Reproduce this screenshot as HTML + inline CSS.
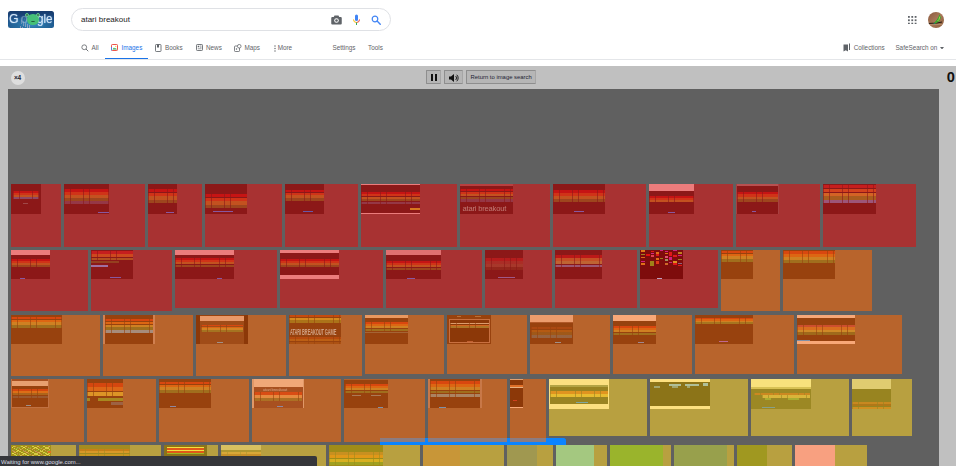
<!DOCTYPE html>
<html lang="en">
<head>
<meta charset="utf-8">
<title>atari breakout - Google Search</title>
<style>
*{box-sizing:border-box;margin:0;padding:0}
html,body{width:956px;height:466px;overflow:hidden;background:#fff}
body{position:relative;font-family:"Liberation Sans",Arial,sans-serif;color:#222}
.abs{position:absolute}
#logo{left:8px;top:11px;width:46px;height:17px;border-radius:2.5px;background:radial-gradient(ellipse 26px 9px at 50% 78%,#3a8fc0 0%,rgba(42,120,170,.6) 55%,rgba(30,80,140,0) 100%),linear-gradient(180deg,#173a6c 0%,#1d4f88 55%,#1f5c92 100%);overflow:hidden;color:#e6f3ff;font-size:13.6px;line-height:17px}
#logo .lg{position:absolute;top:-0.6px;text-shadow:0 0 1.5px #9fd0ff;opacity:.92}
#logo .fw{position:absolute;left:12px;top:5px;width:10px;height:12px;background:repeating-linear-gradient(100deg,rgba(220,190,210,.55) 0 .7px,transparent .7px 2.2px);-webkit-mask-image:linear-gradient(to top,#000 10%,transparent 95%);mask-image:linear-gradient(to top,#000 10%,transparent 95%)}
#logo .frog{position:absolute;left:19.4px;top:3.3px;width:11.4px;height:10.6px;border-radius:50%;background:#45c078}
#logo .e1{position:absolute;left:17.2px;top:2.4px;width:4px;height:4px;border-radius:50%;background:#8fe0b0;border:0.7px solid #59c88a;box-shadow:inset 0 0 0 0.6px #222}
#logo .e2{position:absolute;left:28.4px;top:2.1px;width:4px;height:4px;border-radius:50%;background:#8fe0b0;border:0.7px solid #59c88a;box-shadow:inset 0 0 0 0.6px #222}
#logo .sm{position:absolute;left:23.2px;top:9.2px;width:3.6px;height:2px;border-bottom:0.7px solid #1d5a3a;border-radius:0 0 50% 50%}
#sbox{left:71px;top:8px;width:320px;height:23px;border:1px solid #dfe1e5;border-radius:12px;background:#fff}
#q{left:81px;top:14.7px;font-size:8px;line-height:10px;color:#222;white-space:nowrap}
.tab{position:absolute;top:43.4px;font-size:6.35px;line-height:9px;color:#5f6368;white-space:nowrap}
.tab.on{color:#1a73e8}
#uline{left:105px;top:57.6px;width:43px;height:1.5px;background:#1a73e8}
#sep{left:0;top:59px;width:956px;height:1px;background:#e4e6e9}
#gray{left:0;top:65.8px;width:956px;height:401px;background:#c0c0c0}
#game{left:8px;top:89px;width:931px;height:377px;background:#606060;overflow:hidden}
.bk{position:absolute;overflow:hidden}
.th{position:absolute;left:0;top:0;overflow:hidden}
.th i{position:absolute;display:block}
.th b{position:absolute;display:block;font-weight:normal;opacity:.62;color:#e8c8c0;white-space:nowrap;line-height:1;letter-spacing:-0.2px}
.btn{position:absolute;top:70px;height:14.4px;background:#b6b6b6;border:1px solid #8e8e8e;border-right-color:#a6a6a6;border-radius:1px}
#lives{left:10.5px;top:70.5px;width:14px;height:14px;border-radius:50%;background:#dedede;font-size:6.5px;line-height:14px;text-align:center;color:#223;font-weight:bold;letter-spacing:-0.2px}
#score{right:1.2px;top:68.5px;font-size:14.6px;line-height:17px;font-weight:bold;color:#111}
#status{left:0;top:456px;width:317px;height:10px;background:#35363a;border-top-right-radius:2px;color:#dcdfe4;font-size:5.95px;line-height:12px;padding-left:1px;white-space:nowrap}
#paddle{left:380px;top:437.5px;width:186px;height:7.5px;background:#0a84ff;border-radius:2.5px 2.5px 0 0}
.pg{position:absolute;top:437.5px;height:4.2px;background:#8c7c80}
</style>
</head>
<body>
<!-- header -->
<div id="logo" class="abs"><span class="lg" style="left:1.4px;transform:scaleX(.9);transform-origin:0 0">G</span><span class="lg" style="left:12.5px;opacity:.35">o</span><span class="fw"></span><span class="lg" style="left:22.5px;opacity:.0">o</span><span class="lg" style="left:28.6px;transform:scaleX(.86);transform-origin:0 0">gle</span><span class="frog"></span><span class="e1"></span><span class="e2"></span><span class="sm"></span></div>
<div id="sbox" class="abs"></div>
<div id="q" class="abs">atari breakout</div>
<!-- search box icons -->
<svg class="abs" style="left:331px;top:15px" width="11" height="10" viewBox="0 0 22 20"><path d="M7 1 5.5 4H2.5A2 2 0 0 0 .5 6v11a2 2 0 0 0 2 2h17a2 2 0 0 0 2-2V6a2 2 0 0 0-2-2h-3L15 1z" fill="#5f6368"/><circle cx="11" cy="11" r="4.6" fill="#fff"/><circle cx="11" cy="11" r="2.6" fill="#5f6368"/></svg>
<svg class="abs" style="left:352px;top:14px" width="9" height="12" viewBox="0 0 18 24"><rect x="6" y="1" width="6" height="13" rx="3" fill="#4285f4"/><path d="M3 11a6 6 0 0 0 6 6" fill="none" stroke="#fbbc05" stroke-width="2"/><path d="M15 11a6 6 0 0 1-6 6" fill="none" stroke="#ea4335" stroke-width="2"/><rect x="8" y="17" width="2" height="5" fill="#34a853"/></svg>
<svg class="abs" style="left:371px;top:14.5px" width="10" height="10" viewBox="0 0 20 20"><circle cx="8" cy="8" r="5.6" fill="none" stroke="#4285f4" stroke-width="2.4"/><path d="M12.2 12.2 18.5 18.5" stroke="#4285f4" stroke-width="2.8" stroke-linecap="round"/></svg>
<!-- apps + avatar -->
<svg class="abs" style="left:908px;top:15.5px" width="8.5" height="8.5" viewBox="0 0 17 17"><g fill="#5f6368"><rect x="0" y="0" width="3.6" height="3.6"/><rect x="6.7" y="0" width="3.6" height="3.6"/><rect x="13.4" y="0" width="3.6" height="3.6"/><rect x="0" y="6.7" width="3.6" height="3.6"/><rect x="6.7" y="6.7" width="3.6" height="3.6"/><rect x="13.4" y="6.7" width="3.6" height="3.6"/><rect x="0" y="13.4" width="3.6" height="3.6"/><rect x="6.7" y="13.4" width="3.6" height="3.6"/><rect x="13.4" y="13.4" width="3.6" height="3.6"/></g></svg>
<svg class="abs" style="left:927.9px;top:12px" width="16" height="16" viewBox="0 0 16 16"><defs><clipPath id="avc"><circle cx="8" cy="8" r="8"/></clipPath><linearGradient id="avg" x1="0" y1="0" x2="1" y2="1"><stop offset="0" stop-color="#8a5a40"/><stop offset=".5" stop-color="#a87858"/><stop offset="1" stop-color="#8a5c3c"/></linearGradient></defs><g clip-path="url(#avc)"><rect width="16" height="16" fill="url(#avg)"/><path d="M0 11.5 9 11 14 10" stroke="#2a1c14" stroke-width="1.1" fill="none"/><path d="M11.6 2.200 12.900 5.500 11.500 9 7.500 11.500 4.800 13 5.600 11.400 8.500 8.200 10.400 5z" fill="#3aa62c"/><path d="M11.800 4.500 11 7.500 9.500 9" stroke="#a4d850" stroke-width="1" fill="none"/><path d="M5 12.800 7 11" stroke="#2a5a8a" stroke-width=".8"/><path d="M0 12.500h16" stroke="#b89070" stroke-width=".8"/></g></svg>
<!-- tabs -->
<svg class="abs" style="left:81px;top:43.5px" width="8" height="8" viewBox="0 0 16 16"><circle cx="6.5" cy="6.5" r="4.8" fill="none" stroke="#5f6368" stroke-width="1.6"/><path d="M10 10 14.5 14.5" stroke="#5f6368" stroke-width="1.8"/></svg>
<div class="tab" style="left:91.5px">All</div>
<svg class="abs" style="left:111px;top:44px" width="7" height="7" viewBox="0 0 14 14"><rect x="1" y="1" width="12" height="12" rx="1.5" fill="#fff" stroke="#ea4335" stroke-width="1.8"/><path d="M1 13V6" stroke="#4285f4" stroke-width="1.8"/><path d="M3 11 6 7l2 2.5 1.5-1.5L12 11z" fill="#34a853"/><circle cx="9.5" cy="4.5" r="1.2" fill="#fbbc05"/></svg>
<div class="tab on" style="left:121.5px">Images</div>
<svg class="abs" style="left:155px;top:43.5px" width="6.5" height="8" viewBox="0 0 13 16"><rect x="1" y="1" width="11" height="14" rx="1.5" fill="none" stroke="#5f6368" stroke-width="1.7"/><rect x="4" y="1" width="4" height="6" fill="#5f6368"/></svg>
<div class="tab" style="left:165px">Books</div>
<svg class="abs" style="left:195.5px;top:44px" width="7" height="7" viewBox="0 0 14 14"><rect x="1" y="1" width="12" height="12" rx="1.5" fill="none" stroke="#5f6368" stroke-width="1.7"/><rect x="3.5" y="3.5" width="3" height="3" fill="#5f6368"/><path d="M8 4h3M8 6.5h3M3.5 9.5h7.5" stroke="#5f6368" stroke-width="1.2"/></svg>
<div class="tab" style="left:206px">News</div>
<svg class="abs" style="left:234px;top:43.5px" width="7.5" height="8" viewBox="0 0 15 16"><rect x="1" y="4" width="10" height="11" rx="1.5" fill="none" stroke="#5f6368" stroke-width="1.6"/><circle cx="10.5" cy="4.5" r="3.6" fill="#fff" stroke="#5f6368" stroke-width="1.5"/><circle cx="5" cy="10" r="1.5" fill="#5f6368"/></svg>
<div class="tab" style="left:244.5px">Maps</div>
<svg class="abs" style="left:273.5px;top:44.5px" width="2" height="7" viewBox="0 0 4 14"><circle cx="2" cy="2" r="1.4" fill="#5f6368"/><circle cx="2" cy="7" r="1.4" fill="#5f6368"/><circle cx="2" cy="12" r="1.4" fill="#5f6368"/></svg>
<div class="tab" style="left:277.7px">More</div>
<div class="tab" style="left:332.5px">Settings</div>
<div class="tab" style="left:368px">Tools</div>
<svg class="abs" style="left:843px;top:43px" width="7.5" height="9" viewBox="0 0 15 18"><path d="M1 3h9v14l-4.500-2.500L1 17z" fill="#5f6368"/><path d="M12 1h2v13h-2z" fill="#5f6368"/></svg>
<div class="tab" style="left:853.7px">Collections</div>
<div class="tab" style="left:895.4px">SafeSearch on</div>
<svg class="abs" style="left:939.5px;top:46.5px" width="4" height="2.5" viewBox="0 0 8 5"><path d="M0 0h8L4 5z" fill="#5f6368"/></svg>
<div id="uline" class="abs"></div>
<div id="sep" class="abs"></div>
<!-- game -->
<div id="gray" class="abs"></div>
<div id="lives" class="abs">×4</div>
<div class="btn" style="left:426px;width:15px"><svg style="position:absolute;left:4.3px;top:3.2px" width="6" height="7" viewBox="0 0 6 7"><rect x="0" y="0" width="2" height="7" fill="#111"/><rect x="4" y="0" width="2" height="7" fill="#111"/></svg></div>
<div class="btn" style="left:444px;width:19px"><svg style="position:absolute;left:4px;top:2.8px" width="10" height="8" viewBox="0 0 20 16"><path d="M0 5h4l6-5v16l-6-5H0z" fill="#111"/><path d="M13 4a5 5 0 0 1 0 8M15.500 1.500a9 9 0 0 1 0 13" fill="none" stroke="#111" stroke-width="1.8"/></svg></div>
<div class="btn" style="left:466px;width:70.3px;font-size:5.9px;line-height:12.6px;text-align:center;color:#223;white-space:nowrap">Return to image search</div>
<div id="score" class="abs">0</div>
<div id="game" class="abs">
<div class="bk" style="left:3px;top:95px;width:49.8px;height:62.6px;background:#a83232"><div class="th" style="width:30px;height:30px;background:#8c1818"><i style="left:2px;top:6.8px;width:26px;height:8.2px;opacity:0.86;background:repeating-linear-gradient(to right,#8c181899 0 0.6px,transparent 0.6px 6.3px),linear-gradient(to bottom,#d01414 0.0% 21.0%,transparent 21.0% 25.0%,#dc3818 25.0% 46.0%,transparent 46.0% 50.0%,#dc6c24cc 50.0% 71.0%,transparent 71.0% 75.0%,#905070 75.0% 96.0%,transparent 96.0% 100.0%)"></i><i style="left:12px;top:19px;width:5px;height:0.6px;background:#a04848"></i></div></div>
<div class="bk" style="left:55.8px;top:95px;width:81.2px;height:62.6px;background:#a83232"><div class="th" style="width:45.2px;height:30px;background:#8c1818"><i style="left:0px;top:5px;width:45.2px;height:15px;opacity:0.86;background:repeating-linear-gradient(to right,#8c181899 0 0.6px,transparent 0.6px 6.3px),linear-gradient(to bottom,#d01414 0.0% 16.8%,transparent 16.8% 20.0%,#dc3818 20.0% 36.8%,transparent 36.8% 40.0%,#dc6c24cc 40.0% 56.8%,transparent 56.8% 60.0%,#b0702499 60.0% 76.8%,transparent 76.8% 80.0%,#a0587890 80.0% 96.8%,transparent 96.8% 100.0%)"></i><i style="left:34px;top:28px;width:11px;height:1px;background:#8858a0"></i></div></div>
<div class="bk" style="left:140px;top:95px;width:54px;height:62.6px;background:#a83232"><div class="th" style="width:29px;height:30px;background:#8c1818"><i style="left:0px;top:4.5px;width:29px;height:15.5px;opacity:0.86;background:repeating-linear-gradient(to right,#8c181899 0 0.6px,transparent 0.6px 6.3px),linear-gradient(to bottom,#d01414 0.0% 21.0%,transparent 21.0% 25.0%,#dc3818 25.0% 46.0%,transparent 46.0% 50.0%,#dc6c24cc 50.0% 71.0%,transparent 71.0% 75.0%,#b0702499 75.0% 96.0%,transparent 96.0% 100.0%)"></i><i style="left:18px;top:28px;width:8px;height:1px;background:#8858a0"></i></div></div>
<div class="bk" style="left:197px;top:95px;width:77px;height:62.6px;background:#a83232"><div class="th" style="width:42px;height:30px;background:#8c1818"><i style="left:0px;top:10px;width:42px;height:15px;opacity:0.86;background:repeating-linear-gradient(to right,#8c181899 0 0.6px,transparent 0.6px 6.3px),linear-gradient(to bottom,#d01414 0.0% 21.0%,transparent 21.0% 25.0%,#dc3818 25.0% 46.0%,transparent 46.0% 50.0%,#dc6c24cc 50.0% 71.0%,transparent 71.0% 75.0%,#b0702499 75.0% 96.0%,transparent 96.0% 100.0%)"></i><i style="left:8px;top:27px;width:20px;height:1px;background:#8858a0"></i></div></div>
<div class="bk" style="left:277px;top:95px;width:73px;height:62.6px;background:#a83232"><div class="th" style="width:39px;height:30px;background:#8c1818"><i style="left:0px;top:6px;width:39px;height:11px;opacity:0.86;background:repeating-linear-gradient(to right,#8c181899 0 0.6px,transparent 0.6px 6.3px),linear-gradient(to bottom,#d01414 0.0% 21.0%,transparent 21.0% 25.0%,#dc3818 25.0% 46.0%,transparent 46.0% 50.0%,#dc6c24cc 50.0% 71.0%,transparent 71.0% 75.0%,#b0702499 75.0% 96.0%,transparent 96.0% 100.0%)"></i><i style="left:18px;top:27px;width:10px;height:1px;background:#6858a8"></i></div></div>
<div class="bk" style="left:353px;top:95px;width:96px;height:62.6px;background:#a83232"><div class="th" style="width:59px;height:30px;background:#8c1818"><i style="left:0;top:0px;width:59px;height:1px;background:#ec7c7c"></i><i style="left:0px;top:8px;width:59px;height:12px;opacity:0.86;background:repeating-linear-gradient(to right,#8c181899 0 0.6px,transparent 0.6px 6.3px),linear-gradient(to bottom,#d01414 0.0% 16.8%,transparent 16.8% 20.0%,#dc3818 20.0% 36.8%,transparent 36.8% 40.0%,#dc6c24cc 40.0% 56.8%,transparent 56.8% 60.0%,#b0702499 60.0% 76.8%,transparent 76.8% 80.0%,#a0587890 80.0% 96.8%,transparent 96.8% 100.0%)"></i><i style="left:0;top:29px;width:59px;height:1px;background:#ec7c7c"></i><i style="left:48.6px;top:24.4px;width:10.4px;height:1.6px;background:#d87820"></i></div></div>
<div class="bk" style="left:452px;top:95px;width:90px;height:62.6px;background:#a83232"><div class="th" style="width:53px;height:30px;background:#8c1818"><i style="left:0;top:0px;width:53px;height:2px;background:#b84040"></i><i style="left:0px;top:4.6px;width:53px;height:13.4px;opacity:0.86;background:repeating-linear-gradient(to right,#8c181899 0 0.6px,transparent 0.6px 6.3px),linear-gradient(to bottom,#d01414 0.0% 16.8%,transparent 16.8% 20.0%,#dc3818 20.0% 36.8%,transparent 36.8% 40.0%,#dc6c24cc 40.0% 56.8%,transparent 56.8% 60.0%,#b0702499 60.0% 76.8%,transparent 76.8% 80.0%,#a0587890 80.0% 96.8%,transparent 96.8% 100.0%)"></i><b style="left:2.5px;top:20.6px;font-size:7.6px;color:#e0b4ac">atari breakout</b></div></div>
<div class="bk" style="left:545px;top:95px;width:93px;height:62.6px;background:#a83232"><div class="th" style="width:52px;height:30px;background:#8c1818"><i style="left:0px;top:6px;width:52px;height:12px;opacity:0.86;background:repeating-linear-gradient(to right,#8c181899 0 0.6px,transparent 0.6px 6.3px),linear-gradient(to bottom,#d01414 0.0% 21.0%,transparent 21.0% 25.0%,#dc3818 25.0% 46.0%,transparent 46.0% 50.0%,#dc6c24cc 50.0% 71.0%,transparent 71.0% 75.0%,#b0702499 75.0% 96.0%,transparent 96.0% 100.0%)"></i><i style="left:21px;top:27px;width:10px;height:1px;background:#8858a0"></i></div></div>
<div class="bk" style="left:641px;top:95px;width:84px;height:62.6px;background:#a83232"><div class="th" style="width:45px;height:30px;background:#8c1818"><i style="left:0;top:0px;width:45px;height:7px;background:#ec7c7c"></i><i style="left:0px;top:11.5px;width:45px;height:6.5px;opacity:0.86;background:repeating-linear-gradient(to right,#8c181899 0 0.6px,transparent 0.6px 6.3px),linear-gradient(to bottom,#d01414 0.0% 28.0%,transparent 28.0% 33.3%,#dc3818 33.3% 61.3%,transparent 61.3% 66.7%,#dc6c24cc 66.7% 94.7%,transparent 94.7% 100.0%)"></i><i style="left:19px;top:28px;width:7px;height:1px;background:#8858a0"></i></div></div>
<div class="bk" style="left:728px;top:95px;width:84px;height:62.6px;background:#a83232"><div class="th" style="width:43px;height:30px;background:#8c1818"><i style="left:0;top:0px;width:43px;height:2.4px;background:#b85050"></i><i style="left:0px;top:0;width:1px;height:30px;background:#a84040"></i><i style="left:42px;top:0;width:1px;height:30px;background:#a84040"></i><i style="left:1px;top:7.8px;width:41px;height:9.8px;opacity:0.86;background:repeating-linear-gradient(to right,#8c181899 0 0.6px,transparent 0.6px 6.3px),linear-gradient(to bottom,#d01414 0.0% 21.0%,transparent 21.0% 25.0%,#dc3818 25.0% 46.0%,transparent 46.0% 50.0%,#dc6c24cc 50.0% 71.0%,transparent 71.0% 75.0%,#b0702499 75.0% 96.0%,transparent 96.0% 100.0%)"></i><i style="left:16px;top:27px;width:4px;height:1px;background:#8858a0"></i></div></div>
<div class="bk" style="left:815px;top:95px;width:93px;height:62.6px;background:#a83232"><div class="th" style="width:53px;height:30px;background:#8c1818"><i style="left:0px;top:1px;width:53px;height:19px;opacity:0.86;background:repeating-linear-gradient(to right,#8c181899 0 0.6px,transparent 0.6px 6.3px),linear-gradient(to bottom,#d02020 0.0% 16.8%,transparent 16.8% 20.0%,#e04820 20.0% 36.8%,transparent 36.8% 40.0%,#e07028 40.0% 56.8%,transparent 56.8% 60.0%,#b06820 60.0% 76.8%,transparent 76.8% 80.0%,#a06088 80.0% 96.8%,transparent 96.8% 100.0%)"></i></div></div>
<div class="bk" style="left:3px;top:160.7px;width:76.6px;height:61.8px;background:#a83232"><div class="th" style="width:39px;height:29.3px;background:#8c1818"><i style="left:0;top:0px;width:39px;height:5px;background:#ec7c7c"></i><i style="left:0px;top:9px;width:39px;height:8px;opacity:0.86;background:repeating-linear-gradient(to right,#8c181899 0 0.6px,transparent 0.6px 6.3px),linear-gradient(to bottom,#d01414 0.0% 21.0%,transparent 21.0% 25.0%,#dc3818 25.0% 46.0%,transparent 46.0% 50.0%,#dc6c24cc 50.0% 71.0%,transparent 71.0% 75.0%,#b0702499 75.0% 96.0%,transparent 96.0% 100.0%)"></i><i style="left:9px;top:28px;width:5px;height:1px;background:#8858a0"></i></div></div>
<div class="bk" style="left:82.6px;top:160.7px;width:81.4px;height:61.8px;background:#a83232"><div class="th" style="width:42.4px;height:29.3px;background:#8c1818"><i style="left:0px;top:1px;width:42.4px;height:10px;opacity:0.86;background:repeating-linear-gradient(to right,#8c181899 0 0.6px,transparent 0.6px 6.3px),linear-gradient(to bottom,#d02020 0.0% 28.0%,transparent 28.0% 33.3%,#d85020 33.3% 61.3%,transparent 61.3% 66.7%,#d07828aa 66.7% 94.7%,transparent 94.7% 100.0%)"></i><i style="left:0px;top:11.6px;width:28px;height:1.8px;background:#a0702877"></i><i style="left:0px;top:15px;width:17px;height:2px;background:#a070a0"></i><i style="left:19px;top:27px;width:11px;height:1.5px;background:#8858a0"></i></div></div>
<div class="bk" style="left:167px;top:160.7px;width:102px;height:58.1px;background:#a83232"><div class="th" style="width:59px;height:29.3px;background:#8c1818"><i style="left:0;top:0px;width:59px;height:5px;background:#ec7c7c"></i><i style="left:0px;top:8px;width:59px;height:9px;opacity:0.86;background:repeating-linear-gradient(to right,#8c181899 0 0.6px,transparent 0.6px 6.3px),linear-gradient(to bottom,#d01414 0.0% 21.0%,transparent 21.0% 25.0%,#dc3818 25.0% 46.0%,transparent 46.0% 50.0%,#dc6c24cc 50.0% 71.0%,transparent 71.0% 75.0%,#b0702499 75.0% 96.0%,transparent 96.0% 100.0%)"></i><i style="left:42px;top:28px;width:5px;height:1px;background:#8858a0"></i></div></div>
<div class="bk" style="left:272px;top:160.7px;width:103px;height:58.1px;background:#a83232"><div class="th" style="width:59px;height:29.3px;background:#8c1818"><i style="left:0;top:0px;width:59px;height:3px;background:#ec7c7c"></i><i style="left:0px;top:9px;width:59px;height:10px;opacity:0.86;background:repeating-linear-gradient(to right,#8c181899 0 0.6px,transparent 0.6px 6.3px),linear-gradient(to bottom,#d01414 0.0% 16.8%,transparent 16.8% 20.0%,#dc3818 20.0% 36.8%,transparent 36.8% 40.0%,#dc6c24cc 40.0% 56.8%,transparent 56.8% 60.0%,#b0702499 60.0% 76.8%,transparent 76.8% 80.0%,#8c1818 80.0% 96.8%,transparent 96.8% 100.0%)"></i><i style="left:0;top:25px;width:59px;height:4.3px;background:#ec7c7c"></i></div></div>
<div class="bk" style="left:378px;top:160.7px;width:96px;height:58.1px;background:#a83232"><div class="th" style="width:55px;height:29.3px;background:#8c1818"><i style="left:0;top:0px;width:55px;height:5px;background:#e07070"></i><i style="left:0px;top:11px;width:55px;height:9px;opacity:0.86;background:repeating-linear-gradient(to right,#8c181899 0 0.6px,transparent 0.6px 6.3px),linear-gradient(to bottom,#d01414 0.0% 21.0%,transparent 21.0% 25.0%,#dc3818 25.0% 46.0%,transparent 46.0% 50.0%,#dc6c24cc 50.0% 71.0%,transparent 71.0% 75.0%,#b0702499 75.0% 96.0%,transparent 96.0% 100.0%)"></i><i style="left:21px;top:28px;width:8px;height:1px;background:#8858a0"></i></div></div>
<div class="bk" style="left:477px;top:160.7px;width:67px;height:58.1px;background:#a83232"><div class="th" style="width:38px;height:29.3px;background:#8c1818"><i style="left:0px;top:8px;width:38px;height:12px;opacity:0.86;background:repeating-linear-gradient(to right,#8c181899 0 0.6px,transparent 0.6px 6.3px),linear-gradient(to bottom,#c82020cc 0.0% 21.0%,transparent 21.0% 25.0%,#d0483888 25.0% 46.0%,transparent 46.0% 50.0%,#d0684877 50.0% 71.0%,transparent 71.0% 75.0%,#b0582844 75.0% 96.0%,transparent 96.0% 100.0%)"></i><i style="left:13px;top:27px;width:17px;height:1.5px;background:#a05888"></i></div></div>
<div class="bk" style="left:547px;top:160.7px;width:82px;height:58.1px;background:#a83232"><div class="th" style="width:47px;height:29.3px;background:#8c1818"><i style="left:0px;top:5px;width:47px;height:13px;opacity:0.86;background:repeating-linear-gradient(to right,#8c181899 0 0.6px,transparent 0.6px 6.3px),linear-gradient(to bottom,#c41818 0.0% 21.0%,transparent 21.0% 25.0%,#d05828 25.0% 46.0%,transparent 46.0% 50.0%,#c87038 50.0% 71.0%,transparent 71.0% 75.0%,#a06080 75.0% 96.0%,transparent 96.0% 100.0%)"></i></div></div>
<div class="bk" style="left:632px;top:160.7px;width:78px;height:58.1px;background:#a83232"><div class="th" style="width:43px;height:29.3px;background:#7e0c0c"><i style="left:1.4px;top:0.4px;width:3.8px;height:1.8px;background:#e07818"></i><i style="left:1.4px;top:4.5px;width:3.8px;height:1.2px;background:#a08020"></i><i style="left:1.4px;top:7px;width:3.8px;height:1.4px;background:#e06818"></i><i style="left:1.4px;top:11.1px;width:3.8px;height:1.2px;background:#d02080"></i><i style="left:1.4px;top:13.7px;width:3.8px;height:1.8px;background:#e07018"></i><i style="left:6.2px;top:4.8px;width:3.5px;height:1.8px;background:#e01010"></i><i style="left:10.8px;top:0.9px;width:3.3px;height:1.8px;background:#e01818"></i><i style="left:10.8px;top:3.4px;width:3.3px;height:1.4px;background:#d02888"></i><i style="left:10.8px;top:5.7px;width:3.3px;height:1.8px;background:#e04050"></i><i style="left:10.3px;top:11.6px;width:3.8px;height:4.3px;background:#a08018"></i><i style="left:15.6px;top:2.2px;width:3.5px;height:1.8px;background:#e07018"></i><i style="left:15.6px;top:4.8px;width:3.5px;height:1.8px;background:#e01818"></i><i style="left:15.6px;top:8.1px;width:3.5px;height:2.4px;background:#e07018"></i><i style="left:15.6px;top:11.6px;width:3.5px;height:3px;background:#e03818"></i><i style="left:20.1px;top:0.4px;width:2.9px;height:1.2px;background:#d02080"></i><i style="left:20.1px;top:8.1px;width:2.9px;height:1.4px;background:#988020"></i><i style="left:24.5px;top:0.9px;width:3.5px;height:1.3px;background:#d02080"></i><i style="left:24.5px;top:3.1px;width:3.5px;height:1.7px;background:#e07018"></i><i style="left:24.5px;top:6.6px;width:3.5px;height:1.8px;background:#e05070"></i><i style="left:24.5px;top:9.8px;width:3.5px;height:1.3px;background:#a09060"></i><i style="left:24.5px;top:12.9px;width:3.5px;height:2.6px;background:#d06828"></i><i style="left:28.9px;top:2.2px;width:3.4px;height:1.8px;background:#e01818"></i><i style="left:28.9px;top:4.8px;width:3.4px;height:1.5px;background:#e01818"></i><i style="left:28.9px;top:7.5px;width:3.4px;height:3px;background:#d02080"></i><i style="left:28.9px;top:12px;width:3.4px;height:1.7px;background:#c82078"></i><i style="left:33.4px;top:0.4px;width:3.5px;height:1.2px;background:#d02080"></i><i style="left:33.4px;top:5.7px;width:3.5px;height:1.8px;background:#e01818"></i><i style="left:33.4px;top:11.1px;width:3.5px;height:1.8px;background:#e09020"></i><i style="left:33.4px;top:13.7px;width:3.5px;height:1.8px;background:#e01818"></i><i style="left:37.8px;top:2.2px;width:3.9px;height:2.6px;background:#c08020"></i><i style="left:37.8px;top:5.7px;width:3.9px;height:0.9px;background:#d02080"></i><i style="left:37.8px;top:9.3px;width:3.9px;height:1.2px;background:#a08020"></i><i style="left:37.8px;top:12.9px;width:3.9px;height:1.7px;background:#906080"></i><i style="left:37.8px;top:15.5px;width:3.9px;height:0.9px;background:#e01818"></i><i style="left:17px;top:28px;width:5px;height:1px;background:#c0a0c0"></i></div></div>
<div class="bk" style="left:713px;top:160.7px;width:59px;height:61.3px;background:#b8642c"><div class="th" style="width:32px;height:29.3px;background:#98420e"><i style="left:0px;top:1px;width:32px;height:11px;opacity:0.96;background:repeating-linear-gradient(to right,#98420e99 0 0.6px,transparent 0.6px 6.3px),linear-gradient(to bottom,#dc4810 0.0% 21.0%,transparent 21.0% 25.0%,#e06814 25.0% 46.0%,transparent 46.0% 50.0%,#e09428cc 50.0% 71.0%,transparent 71.0% 75.0%,#a8902899 75.0% 96.0%,transparent 96.0% 100.0%)"></i></div></div>
<div class="bk" style="left:775px;top:160.7px;width:89px;height:61.3px;background:#b8642c"><div class="th" style="width:52px;height:29.3px;background:#98420e"><i style="left:0px;top:1px;width:52px;height:12px;opacity:0.96;background:repeating-linear-gradient(to right,#98420e99 0 0.6px,transparent 0.6px 6.3px),linear-gradient(to bottom,#dc4810 0.0% 21.0%,transparent 21.0% 25.0%,#e06814 25.0% 46.0%,transparent 46.0% 50.0%,#e09428cc 50.0% 71.0%,transparent 71.0% 75.0%,#a8902899 75.0% 96.0%,transparent 96.0% 100.0%)"></i></div></div>
<div class="bk" style="left:3px;top:226px;width:89px;height:60.5px;background:#b8642c"><div class="th" style="width:51px;height:28.6px;background:#98420e"><i style="left:0px;top:1.5px;width:51px;height:11.5px;opacity:0.96;background:repeating-linear-gradient(to right,#98420e99 0 0.6px,transparent 0.6px 6.3px),linear-gradient(to bottom,#dc4810 0.0% 21.0%,transparent 21.0% 25.0%,#e06814 25.0% 46.0%,transparent 46.0% 50.0%,#e09428cc 50.0% 71.0%,transparent 71.0% 75.0%,#a8902899 75.0% 96.0%,transparent 96.0% 100.0%)"></i></div></div>
<div class="bk" style="left:95px;top:226px;width:90px;height:60.5px;background:#b8642c"><div class="th" style="width:52px;height:28.6px;background:#98420e"><i style="left:2px;top:4px;width:48px;height:14px;opacity:0.96;background:repeating-linear-gradient(to right,#98420e99 0 0.6px,transparent 0.6px 6.3px),linear-gradient(to bottom,#dc4810 0.0% 16.8%,transparent 16.8% 20.0%,#e06814 20.0% 36.8%,transparent 36.8% 40.0%,#e09428cc 40.0% 56.8%,transparent 56.8% 60.0%,#a8902899 60.0% 76.8%,transparent 76.8% 80.0%,#a89080 80.0% 96.8%,transparent 96.8% 100.0%)"></i><i style="left:0px;top:0;width:2px;height:28.6px;background:#d08050"></i><i style="left:50px;top:0;width:2px;height:28.6px;background:#d08050"></i></div></div>
<div class="bk" style="left:188px;top:226px;width:90px;height:60.5px;background:#b8642c"><div class="th" style="width:52px;height:28.6px;background:#98420e"><i style="left:4px;top:0.5px;width:44px;height:5.1px;background:#e89868"></i><i style="left:4px;top:5.6px;width:44px;height:23px;background:#a04c18"></i><i style="left:5px;top:9.5px;width:42px;height:7px;opacity:0.96;background:repeating-linear-gradient(to right,#98420e99 0 0.6px,transparent 0.6px 6.3px),linear-gradient(to bottom,#dc4810 0.0% 21.0%,transparent 21.0% 25.0%,#e06814 25.0% 46.0%,transparent 46.0% 50.0%,#e09428cc 50.0% 71.0%,transparent 71.0% 75.0%,#a8902899 75.0% 96.0%,transparent 96.0% 100.0%)"></i><i style="left:21px;top:26.5px;width:6px;height:0.8px;background:#a09088"></i><i style="left:0px;top:0;width:4px;height:28.6px;background:#8c3808"></i><i style="left:48px;top:0;width:4px;height:28.6px;background:#8c3808"></i></div></div>
<div class="bk" style="left:281px;top:226px;width:73px;height:60.5px;background:#b8642c"><div class="th" style="width:52px;height:28.6px;background:#98420e"><i style="left:0px;top:0px;width:52px;height:7.6px;opacity:0.96;background:repeating-linear-gradient(to right,#98420e99 0 0.6px,transparent 0.6px 6.3px),linear-gradient(to bottom,#c84c10 0.0% 28.0%,transparent 28.0% 33.3%,#d88c20 33.3% 61.3%,transparent 61.3% 66.7%,#b89020aa 66.7% 94.7%,transparent 94.7% 100.0%)"></i><b style="left:1px;top:13.2px;font-size:9px;transform:scaleX(0.44);transform-origin:0 0;font-weight:bold;color:#f0d8c8">ATARI BREAKOUT GAME</b><i style="left:0px;top:22px;width:52px;height:6.6px;opacity:0.96;background:repeating-linear-gradient(to right,#98420e99 0 0.6px,transparent 0.6px 6.3px),linear-gradient(to bottom,#c85010aa 0.0% 28.0%,transparent 28.0% 33.3%,#d07018aa 33.3% 61.3%,transparent 61.3% 66.7%,#c0601888 66.7% 94.7%,transparent 94.7% 100.0%)"></i></div></div>
<div class="bk" style="left:357px;top:226px;width:79px;height:58.5px;background:#b8642c"><div class="th" style="width:43px;height:28.6px;background:#98420e"><i style="left:0;top:0px;width:43px;height:3px;background:#e89860"></i><i style="left:0px;top:7px;width:43px;height:8.5px;opacity:0.96;background:repeating-linear-gradient(to right,#98420e99 0 0.6px,transparent 0.6px 6.3px),linear-gradient(to bottom,#dc4810 0.0% 21.0%,transparent 21.0% 25.0%,#e06814 25.0% 46.0%,transparent 46.0% 50.0%,#e09428cc 50.0% 71.0%,transparent 71.0% 75.0%,#a8902899 75.0% 96.0%,transparent 96.0% 100.0%)"></i><i style="left:0px;top:16.5px;width:43px;height:0.8px;background:#b8987066"></i></div></div>
<div class="bk" style="left:439px;top:226px;width:80px;height:58.5px;background:#b8642c"><div class="th" style="width:44px;height:28.6px;background:#98420e"><i style="left:10px;top:0.6px;width:4px;height:1px;background:#d0905099"></i><i style="left:28px;top:0.6px;width:6px;height:1px;background:#d0905099"></i><i style="left:2px;top:3.6px;width:41.2px;height:24px;background:#c87040"></i><i style="left:3px;top:4.6px;width:39.2px;height:22px;background:#8c3808"></i><i style="left:3px;top:7.6px;width:39.2px;height:5px;opacity:0.96;background:repeating-linear-gradient(to right,#98420e99 0 0.6px,transparent 0.6px 6.3px),linear-gradient(to bottom,#e0a070 0.0% 28.0%,transparent 28.0% 33.3%,#d86820 33.3% 61.3%,transparent 61.3% 66.7%,#b07828 66.7% 94.7%,transparent 94.7% 100.0%)"></i><i style="left:20px;top:26px;width:6px;height:0.8px;background:#c06030"></i></div></div>
<div class="bk" style="left:522px;top:226px;width:80px;height:58.5px;background:#b8642c"><div class="th" style="width:43px;height:28.6px;background:#98420e"><i style="left:0;top:0px;width:43px;height:7px;background:#ec9c6c"></i><i style="left:0;top:7px;width:43px;height:1px;background:#c0683899"></i><i style="left:1px;top:12px;width:41px;height:10.5px;opacity:0.96;background:repeating-linear-gradient(to right,#98420e99 0 0.6px,transparent 0.6px 6.3px),linear-gradient(to bottom,#d8581855 0.0% 21.0%,transparent 21.0% 25.0%,#d8781877 25.0% 46.0%,transparent 46.0% 50.0%,#b0883055 50.0% 71.0%,transparent 71.0% 75.0%,#98989066 75.0% 96.0%,transparent 96.0% 100.0%)"></i><i style="left:25px;top:26.6px;width:6px;height:0.8px;background:#a09088"></i></div></div>
<div class="bk" style="left:605px;top:226px;width:79px;height:58.5px;background:#b8642c"><div class="th" style="width:43px;height:28.6px;background:#98420e"><i style="left:0;top:0px;width:43px;height:6px;background:#f8a878"></i><i style="left:0px;top:11px;width:43px;height:9px;opacity:0.96;background:repeating-linear-gradient(to right,#98420e99 0 0.6px,transparent 0.6px 6.3px),linear-gradient(to bottom,#dc4810 0.0% 21.0%,transparent 21.0% 25.0%,#e06814 25.0% 46.0%,transparent 46.0% 50.0%,#e09428cc 50.0% 71.0%,transparent 71.0% 75.0%,#a8902899 75.0% 96.0%,transparent 96.0% 100.0%)"></i><i style="left:25px;top:27px;width:6px;height:1px;background:#a08890"></i></div></div>
<div class="bk" style="left:687px;top:226px;width:99px;height:58.5px;background:#b8642c"><div class="th" style="width:58px;height:28.6px;background:#98420e"><i style="left:0px;top:3px;width:58px;height:6px;opacity:0.96;background:repeating-linear-gradient(to right,#98420e99 0 0.6px,transparent 0.6px 6.3px),linear-gradient(to bottom,#dc4810 0.0% 21.0%,transparent 21.0% 25.0%,#e06814 25.0% 46.0%,transparent 46.0% 50.0%,#e09428cc 50.0% 71.0%,transparent 71.0% 75.0%,#a87820 75.0% 96.0%,transparent 96.0% 100.0%)"></i><i style="left:24px;top:26px;width:9px;height:1px;background:#c06890"></i></div></div>
<div class="bk" style="left:789px;top:226px;width:105px;height:58.5px;background:#b8642c"><div class="th" style="width:58px;height:28.6px;background:#98420e"><i style="left:0;top:0px;width:58px;height:2.5px;background:#f8a878"></i><i style="left:0px;top:9.8px;width:58px;height:10.6px;opacity:0.96;background:repeating-linear-gradient(to right,#98420e99 0 0.6px,transparent 0.6px 6.3px),linear-gradient(to bottom,#d05030 0.0% 21.0%,transparent 21.0% 25.0%,#dc7020 25.0% 46.0%,transparent 46.0% 50.0%,#e0a030cc 50.0% 71.0%,transparent 71.0% 75.0%,#a8902888 75.0% 96.0%,transparent 96.0% 100.0%)"></i><i style="left:0px;top:25.2px;width:13px;height:0.8px;background:#8090a8"></i><i style="left:0;top:26px;width:58px;height:3px;background:#f8a878"></i></div></div>
<div class="bk" style="left:3px;top:290px;width:73px;height:62.7px;background:#b8642c"><div class="th" style="width:38px;height:28.6px;background:#98420e"><i style="left:0;top:0px;width:38px;height:2.4px;background:#a85020"></i><i style="left:0;top:2.4px;width:38px;height:4.2px;background:#e8a070"></i><i style="left:1px;top:10px;width:36px;height:9px;opacity:0.96;background:repeating-linear-gradient(to right,#98420e99 0 0.6px,transparent 0.6px 6.3px),linear-gradient(to bottom,#d84810 0.0% 21.0%,transparent 21.0% 25.0%,#e07018 25.0% 46.0%,transparent 46.0% 50.0%,#c8902877 50.0% 71.0%,transparent 71.0% 75.0%,#a0887855 75.0% 96.0%,transparent 96.0% 100.0%)"></i><i style="left:15px;top:26.4px;width:5px;height:0.8px;background:#a09088"></i><i style="left:0px;top:0;width:1px;height:28.6px;background:#c07040"></i><i style="left:37px;top:0;width:1px;height:28.6px;background:#c07040"></i><i style="left:0;top:27.8px;width:38px;height:0.8px;background:#c07040"></i></div></div>
<div class="bk" style="left:79px;top:290px;width:69px;height:62.7px;background:#b8642c"><div class="th" style="width:36px;height:28.6px;background:#98420e"><i style="left:0px;top:4px;width:36px;height:8.6px;opacity:0.96;background:repeating-linear-gradient(to right,#98420e99 0 0.6px,transparent 0.6px 6.3px),linear-gradient(to bottom,#d84810 0.0% 42.0%,transparent 42.0% 50.0%,#e06818 50.0% 92.0%,transparent 92.0% 100.0%)"></i><i style="left:0px;top:13.4px;width:36px;height:4.6px;opacity:0.96;background:repeating-linear-gradient(to right,#98420e99 0 0.6px,transparent 0.6px 6.3px),linear-gradient(to bottom,#e09828 0.0% 84.0%,transparent 84.0% 100.0%)"></i><i style="left:11px;top:18.6px;width:25px;height:3px;background:#a88820"></i><i style="left:0px;top:18.6px;width:3px;height:3px;background:#a88820"></i><i style="left:24px;top:22.6px;width:12px;height:3.4px;background:#a0786899"></i></div></div>
<div class="bk" style="left:151px;top:290px;width:90px;height:62.7px;background:#b8642c"><div class="th" style="width:52px;height:28.6px;background:#98420e"><i style="left:0px;top:2.6px;width:52px;height:11.4px;opacity:0.96;background:repeating-linear-gradient(to right,#98420e99 0 0.6px,transparent 0.6px 6.3px),linear-gradient(to bottom,#dc4810 0.0% 21.0%,transparent 21.0% 25.0%,#e06814 25.0% 46.0%,transparent 46.0% 50.0%,#e09428cc 50.0% 71.0%,transparent 71.0% 75.0%,#a8902899 75.0% 96.0%,transparent 96.0% 100.0%)"></i><i style="left:11px;top:27.4px;width:6px;height:1px;background:#9088a0"></i></div></div>
<div class="bk" style="left:244px;top:290px;width:89px;height:62.7px;background:#b8642c"><div class="th" style="width:52px;height:28.6px;background:#98420e"><i style="left:0;top:0px;width:52px;height:8.4px;background:#f0a878"></i><i style="left:1.5px;top:8.4px;width:49px;height:20.2px;background:#a85020"></i><b style="left:11px;top:9.4px;font-size:4.4px;color:#f0d0b8">atari breakout</b><i style="left:2px;top:13.4px;width:48px;height:8.2px;opacity:0.96;background:repeating-linear-gradient(to right,#98420e99 0 0.6px,transparent 0.6px 6.3px),linear-gradient(to bottom,#dc4c14 0.0% 28.0%,transparent 28.0% 33.3%,#e88c40 33.3% 61.3%,transparent 61.3% 66.7%,#b0882899 66.7% 94.7%,transparent 94.7% 100.0%)"></i><i style="left:25px;top:27px;width:6px;height:1px;background:#9088a0"></i><i style="left:0px;top:0;width:1.5px;height:28.6px;background:#e09868"></i><i style="left:50.5px;top:0;width:1.5px;height:28.6px;background:#e09868"></i></div></div>
<div class="bk" style="left:336px;top:290px;width:81px;height:62.7px;background:#b8642c"><div class="th" style="width:44px;height:28.6px;background:#98420e"><i style="left:0;top:0px;width:44px;height:1px;background:#b0602c"></i><i style="left:1px;top:5.4px;width:43px;height:8.6px;opacity:0.96;background:repeating-linear-gradient(to right,#98420e99 0 0.6px,transparent 0.6px 6.3px),linear-gradient(to bottom,#dc4810 0.0% 21.0%,transparent 21.0% 25.0%,#e06814 25.0% 46.0%,transparent 46.0% 50.0%,#e09428cc 50.0% 71.0%,transparent 71.0% 75.0%,#a8902899 75.0% 96.0%,transparent 96.0% 100.0%)"></i><i style="left:8px;top:15.5px;width:9px;height:1.5px;background:#b8a08899"></i><i style="left:27px;top:15.5px;width:10px;height:1.5px;background:#b8a08899"></i><i style="left:34px;top:27.6px;width:5px;height:0.8px;background:#8090a8"></i></div></div>
<div class="bk" style="left:420px;top:290px;width:79px;height:62.7px;background:#b8642c"><div class="th" style="width:54px;height:28.6px;background:#98420e"><i style="left:1.5px;top:2.4px;width:50.5px;height:12.6px;opacity:0.96;background:repeating-linear-gradient(to right,#98420e99 0 0.6px,transparent 0.6px 6.3px),linear-gradient(to bottom,#dc4810 0.0% 21.0%,transparent 21.0% 25.0%,#e06814 25.0% 46.0%,transparent 46.0% 50.0%,#e09428cc 50.0% 71.0%,transparent 71.0% 75.0%,#a8902899 75.0% 96.0%,transparent 96.0% 100.0%)"></i><i style="left:1.5px;top:15.4px;width:50.5px;height:3px;opacity:0.96;background:repeating-linear-gradient(to right,#98420e99 0 0.6px,transparent 0.6px 6.3px),linear-gradient(to bottom,#b8a890aa 0.0% 84.0%,transparent 84.0% 100.0%)"></i><i style="left:11px;top:27.6px;width:7px;height:0.8px;background:#8090a8"></i><i style="left:0px;top:0;width:1.5px;height:28.6px;background:#c87848"></i><i style="left:52px;top:0;width:2px;height:28.6px;background:#c87848"></i></div></div>
<div class="bk" style="left:502px;top:290px;width:36px;height:62.7px;background:#b8642c"><div class="th" style="width:13px;height:28.6px;background:#8c3808"><i style="left:0;top:0px;width:13px;height:0.9px;background:#e0a070"></i><i style="left:0;top:6.4px;width:13px;height:2px;background:#e07028"></i><i style="left:0;top:8.4px;width:13px;height:0.8px;background:#e8b080"></i><i style="left:3px;top:20.6px;width:4px;height:0.8px;background:#d04020"></i><i style="left:0;top:27.7px;width:13px;height:0.9px;background:#f8a878"></i></div></div>
<div class="bk" style="left:541px;top:290px;width:98px;height:57px;background:#b8a040"><div class="th" style="width:60px;height:30px;background:#9a8422"><i style="left:0;top:0px;width:60px;height:5.6px;background:#fce080"></i><i style="left:0;top:5.6px;width:60px;height:2px;background:#b4a444"></i><i style="left:1px;top:12.4px;width:58px;height:5.6px;opacity:1;background:repeating-linear-gradient(to right,#9a842299 0 0.6px,transparent 0.6px 6.3px),linear-gradient(to bottom,#e09420 0.0% 42.0%,transparent 42.0% 50.0%,#e8bc30 50.0% 92.0%,transparent 92.0% 100.0%)"></i><i style="left:27px;top:22.6px;width:12px;height:0.8px;background:#80a8a0"></i><i style="left:0;top:25px;width:60px;height:5px;background:#fce080"></i><i style="left:0px;top:0;width:1.2px;height:30px;background:#fce080"></i><i style="left:58.8px;top:0;width:1.2px;height:30px;background:#fce080"></i></div></div>
<div class="bk" style="left:642px;top:290px;width:98px;height:57px;background:#b8a040"><div class="th" style="width:60px;height:30px;background:#8c7418"><i style="left:0;top:0px;width:60px;height:3px;background:#fce080"></i><i style="left:19px;top:4.6px;width:11.5px;height:2.4px;background:#b0c098"></i><i style="left:34.5px;top:4.6px;width:14.2px;height:2.4px;background:#b0c098"></i><i style="left:52.5px;top:4px;width:5.5px;height:2.5px;background:#b0c098"></i><i style="left:3.7px;top:7.4px;width:6.3px;height:1.6px;background:#b0c098aa"></i><i style="left:22.4px;top:7.4px;width:5.6px;height:1.6px;background:#b0c098aa"></i><i style="left:36.7px;top:7.4px;width:3.3px;height:1.6px;background:#b0c098aa"></i><i style="left:14px;top:26.6px;width:3px;height:0.8px;background:#c0b870"></i><i style="left:0;top:27px;width:60px;height:3px;background:#fce080"></i></div></div>
<div class="bk" style="left:743px;top:290px;width:98px;height:57px;background:#b8a040"><div class="th" style="width:60px;height:30px;background:#9c8824"><i style="left:0;top:0px;width:60px;height:7.6px;background:#f8e27c"></i><i style="left:0;top:7.6px;width:60px;height:2px;background:#d8c254"></i><i style="left:3px;top:14px;width:56px;height:2px;opacity:1;background:repeating-linear-gradient(to right,#9c882499 0 0.6px,transparent 0.6px 6.3px),linear-gradient(to bottom,#d88820cc 0.0% 84.0%,transparent 84.0% 100.0%)"></i><i style="left:11px;top:16.4px;width:48px;height:2.2px;opacity:1;background:repeating-linear-gradient(to right,#9c882499 0 0.6px,transparent 0.6px 6.3px),linear-gradient(to bottom,#e8c040cc 0.0% 84.0%,transparent 84.0% 100.0%)"></i><i style="left:14px;top:19.2px;width:6px;height:1.8px;background:#b0c038aa"></i><i style="left:37px;top:19.2px;width:11px;height:1.8px;background:#b0c038aa"></i><i style="left:11px;top:28px;width:13px;height:1px;background:#88a088"></i></div></div>
<div class="bk" style="left:844px;top:290px;width:60px;height:57px;background:#b8a040"><div class="th" style="width:39px;height:30px;background:#988420"><i style="left:0;top:0px;width:39px;height:10px;background:#e0cc70"></i><i style="left:0px;top:23px;width:39px;height:7px;opacity:1;background:repeating-linear-gradient(to right,#98842099 0 0.6px,transparent 0.6px 6.3px),linear-gradient(to bottom,#c88820 0.0% 28.0%,transparent 28.0% 33.3%,#b07818 33.3% 61.3%,transparent 61.3% 66.7%,#d09020 66.7% 94.7%,transparent 94.7% 100.0%)"></i></div></div>
<div class="bk" style="left:3px;top:356px;width:65px;height:21px;background:#b8a040"><div class="th" style="width:40px;height:21px;background:#a49018"><i style="left:1px;top:0.6px;width:38px;height:10.4px;background:repeating-linear-gradient(28deg,transparent 0 2.2px,#f0e858b0 2.2px 3px,transparent 3px 4.6px,#e89070a0 4.6px 5.2px),repeating-linear-gradient(-28deg,transparent 0 2.4px,#e8e050b0 2.4px 3.2px,transparent 3.2px 5px,#90c040a0 5px 5.6px)"></i><i style="left:37px;top:6.4px;width:3px;height:2px;background:#e07020"></i></div></div>
<div class="bk" style="left:71px;top:356px;width:82px;height:21px;background:#b8a040"><div class="th" style="width:51px;height:21px;background:#a48c20"><i style="left:0px;top:3.6px;width:51px;height:7.4px;opacity:1;background:repeating-linear-gradient(to right,#a48c2099 0 0.6px,transparent 0.6px 6.3px),linear-gradient(to bottom,#c88018 0.0% 28.0%,transparent 28.0% 33.3%,#d89828 33.3% 61.3%,transparent 61.3% 66.7%,#c89820 66.7% 94.7%,transparent 94.7% 100.0%)"></i></div></div>
<div class="bk" style="left:156px;top:356px;width:54px;height:21px;background:#b8a040"><div class="th" style="width:43px;height:21px;background:#8c7418"><i style="left:2.5px;top:2px;width:37px;height:7.4px;background:linear-gradient(to bottom,#f0e040 0.0% 20.0%,#e05818 20.0% 40.0%,#f0e040 40.0% 60.0%,#e05818 60.0% 80.0%,#a0b820 80.0% 100.0%)"></i></div></div>
<div class="bk" style="left:213px;top:356px;width:105px;height:21px;background:#b8a040"><div class="th" style="width:40px;height:21px;background:#b09830"><i style="left:0;top:0px;width:40px;height:5px;background:#d8c060"></i><i style="left:0px;top:7px;width:40px;height:4px;opacity:1;background:repeating-linear-gradient(to right,#b0983099 0 0.6px,transparent 0.6px 6.3px),linear-gradient(to bottom,#d8a838 0.0% 42.0%,transparent 42.0% 50.0%,#c89028 50.0% 92.0%,transparent 92.0% 100.0%)"></i></div></div>
<div class="bk" style="left:321px;top:356px;width:91px;height:21px;background:#b8a040"><div class="th" style="width:54px;height:21px;background:#a08c18"><i style="left:0px;top:7px;width:54px;height:14px;opacity:1;background:repeating-linear-gradient(to right,#a08c1899 0 0.6px,transparent 0.6px 6.3px),linear-gradient(to bottom,#c89020 0.0% 21.0%,transparent 21.0% 25.0%,#e09818 25.0% 46.0%,transparent 46.0% 50.0%,#d8b020 50.0% 71.0%,transparent 71.0% 75.0%,#a0a020 75.0% 96.0%,transparent 96.0% 100.0%)"></i></div></div>
<div class="bk" style="left:415px;top:356px;width:81px;height:21px;background:#b8a040"><div class="th" style="width:36.5px;height:21px;background:#c89638"></div></div>
<div class="bk" style="left:499px;top:356px;width:46px;height:21px;background:#b8a040"><div class="th" style="width:30px;height:21px;background:#a09850"></div></div>
<div class="bk" style="left:548px;top:356px;width:51px;height:21px;background:#b8a040"><div class="th" style="width:38px;height:21px;background:#a4c880"></div></div>
<div class="bk" style="left:602px;top:356px;width:61px;height:21px;background:#b8a040"><div class="th" style="width:53px;height:21px;background:#9ab42c"></div></div>
<div class="bk" style="left:666px;top:356px;width:60px;height:21px;background:#b8a040"><div class="th" style="width:53px;height:21px;background:#98a04c"></div></div>
<div class="bk" style="left:729px;top:356px;width:55px;height:21px;background:#b8a040"><div class="th" style="width:30px;height:21px;background:#a09820"></div></div>
<div class="bk" style="left:787px;top:356px;width:72px;height:21px;background:#b8a040"><div class="th" style="width:40px;height:21px;background:#f8a080"></div></div>
</div>
<div id="paddle" class="abs"></div>
<div class="pg" style="left:380px;width:45px"></div>
<div class="pg" style="left:428px;width:79px"></div>
<div class="pg" style="left:510px;width:36px"></div>
<div id="status" class="abs">Waiting for www.google.com...</div>
</body>
</html>
